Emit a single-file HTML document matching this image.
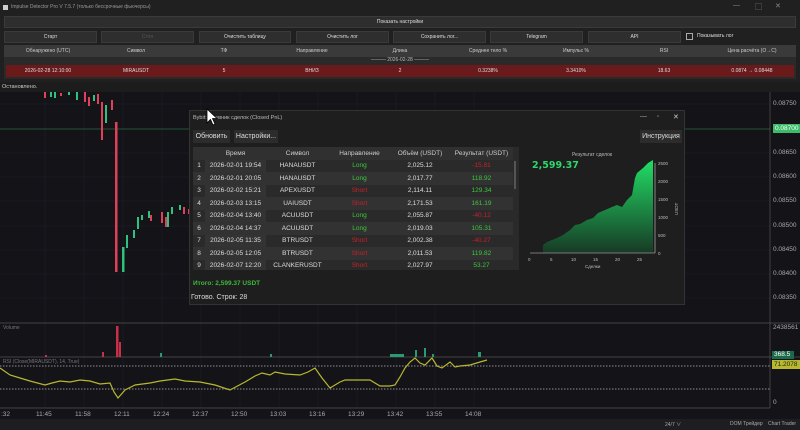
<!DOCTYPE html>
<html><head><meta charset="utf-8"><style>
*{margin:0;padding:0;box-sizing:border-box}
body{width:800px;height:430px;overflow:hidden;background:#131318;font-family:"Liberation Sans","Noto Sans CJK SC",sans-serif;color:#ddd;position:relative}
.abs{position:absolute}
.btn{position:absolute;background:#2e2e2e;border:1px solid #3a3a3a;color:#ddd;font-size:5px;text-align:center;line-height:10px;height:12px}
.th{position:absolute;font-size:5px;color:#ccc;text-align:center;top:46px;line-height:10px}
.rr{position:absolute;font-size:5px;color:#ddd;text-align:center;top:66px;line-height:10px}
.pl{position:absolute;left:773px;font-size:6.5px;color:#aaa}
table{border-collapse:collapse}
.dt td{font-size:6.5px;height:12.5px;text-align:center;color:#ddd}
.dt td.g{color:#3cc83c}.dt td.r{color:#c8202a}
.tl{position:absolute;top:411px;font-size:6.5px;color:#aaa}
</style></head><body>
<div class="abs" style="left:0;top:0;width:800px;height:82px;background:#202020"></div>
<div class="abs" style="left:3px;top:5px;width:5px;height:5px;background:#ccc"></div>
<div class="abs" style="left:11px;top:4px;font-size:5px;color:#999">Impulse Detector Pro V 7.5.7 (только бессрочные фьючерсы)</div>
<div class="abs" style="left:733px;top:2px;font-size:7px;color:#888">—</div>
<div class="abs" style="left:755px;top:2px;font-size:7px;color:#888">▢</div>
<div class="abs" style="left:775px;top:2px;font-size:7px;color:#888">✕</div>
<div class="btn" style="left:4px;top:16px;width:792px">Показать настройки</div>
<div class="btn" style="left:4px;top:31px;width:93px">Старт</div>
<div class="btn" style="left:101px;top:31px;width:93px;color:#555">Стоп</div>
<div class="btn" style="left:199px;top:31px;width:92px">Очистить таблицу</div>
<div class="btn" style="left:296px;top:31px;width:93px">Очистить лог</div>
<div class="btn" style="left:393px;top:31px;width:93px">Сохранить лог...</div>
<div class="btn" style="left:490px;top:31px;width:93px">Telegram</div>
<div class="btn" style="left:588px;top:31px;width:93px">API</div>
<div class="abs" style="left:686px;top:33px;width:7px;height:7px;border:1px solid #aaa"></div>
<div class="abs" style="left:697px;top:33px;font-size:5px">Показывать лог</div>
<div class="abs" style="left:4px;top:45px;width:792px;height:34px;background:#2a2a2a"></div>
<div class="abs" style="left:4px;top:45px;width:792px;height:12px;background:#3a3a3a"></div>
<div class="th" style="left:4px;width:88px">Обнаружено (UTC)</div>
<div class="th" style="left:92px;width:88px">Символ</div>
<div class="th" style="left:180px;width:88px">ТФ</div>
<div class="th" style="left:268px;width:88px">Направление</div>
<div class="th" style="left:356px;width:88px">Длина</div>
<div class="th" style="left:444px;width:88px">Среднее тело %</div>
<div class="th" style="left:532px;width:88px">Импульс %</div>
<div class="th" style="left:620px;width:88px">RSI</div>
<div class="th" style="left:708px;width:88px">Цена расчёта (O→C)</div>
<div class="abs" style="left:4px;top:57px;width:792px;text-align:center;font-size:5px;color:#bbb">——— 2026-02-28 ———</div>
<div class="abs" style="left:6px;top:65px;width:788px;height:12px;background:#6b1a1c"></div>
<div class="rr" style="left:4px;width:88px">2026-02-28 12:10:00</div>
<div class="rr" style="left:92px;width:88px">MIRAUSDT</div>
<div class="rr" style="left:180px;width:88px">5</div>
<div class="rr" style="left:268px;width:88px">ВНИЗ</div>
<div class="rr" style="left:356px;width:88px">2</div>
<div class="rr" style="left:444px;width:88px">0.3238%</div>
<div class="rr" style="left:532px;width:88px">3.3410%</div>
<div class="rr" style="left:620px;width:88px">18.63</div>
<div class="rr" style="left:708px;width:88px">0.0874 → 0.08448</div>
<div class="abs" style="left:0;top:82px;width:800px;height:10px;background:#1c1c1c"></div>
<div class="abs" style="left:2px;top:84px;font-size:5.5px;color:#ccc">Остановлено.</div>
<svg class="abs" style="left:0;top:92px" width="800" height="338">
<g stroke="#1e1e26" stroke-width="0.7">
<line x1="0" y1="12" x2="770" y2="12"/><line x1="0" y1="37" x2="770" y2="37"/><line x1="0" y1="61" x2="770" y2="61"/><line x1="0" y1="85" x2="770" y2="85"/><line x1="0" y1="109" x2="770" y2="109"/><line x1="0" y1="134" x2="770" y2="134"/><line x1="0" y1="158" x2="770" y2="158"/><line x1="0" y1="182" x2="770" y2="182"/><line x1="0" y1="206" x2="770" y2="206"/>
<line x1="45" y1="0" x2="45" y2="316"/><line x1="84" y1="0" x2="84" y2="316"/><line x1="123" y1="0" x2="123" y2="316"/><line x1="162" y1="0" x2="162" y2="316"/><line x1="201" y1="0" x2="201" y2="316"/><line x1="240" y1="0" x2="240" y2="316"/><line x1="279" y1="0" x2="279" y2="316"/><line x1="318" y1="0" x2="318" y2="316"/><line x1="357" y1="0" x2="357" y2="316"/><line x1="396" y1="0" x2="396" y2="316"/><line x1="435" y1="0" x2="435" y2="316"/><line x1="474" y1="0" x2="474" y2="316"/>
</g>
<line x1="0" y1="37" x2="770" y2="37" stroke="#2a6a40" stroke-width="0.8"/>
<g fill="#e0405a">
<rect x="44" y="0" width="2" height="6"/><rect x="60" y="1" width="2" height="3"/><rect x="84" y="0" width="2" height="10"/><rect x="88" y="5" width="2" height="9"/><rect x="97" y="2" width="2" height="10"/><rect x="101" y="10" width="2" height="38"/><rect x="111" y="8" width="2" height="10"/><rect x="115" y="30" width="2.5" height="150"/><rect x="150" y="123" width="2" height="6"/><rect x="161" y="120" width="2" height="11"/><rect x="165" y="125" width="2" height="10"/><rect x="183" y="115" width="2" height="7"/><rect x="188" y="117" width="2" height="5"/>
</g>
<g fill="#2ec27e">
<rect x="50" y="0" width="2" height="5"/><rect x="54" y="0" width="2" height="6"/><rect x="68" y="0" width="2" height="3"/><rect x="76" y="0" width="2" height="8"/><rect x="93" y="3" width="2" height="6"/><rect x="105" y="13" width="2" height="18"/><rect x="122" y="155" width="2.5" height="25"/><rect x="126" y="143" width="2" height="13"/><rect x="133" y="138" width="2" height="8"/><rect x="137" y="125" width="2" height="12"/><rect x="141" y="123" width="2" height="5"/><rect x="148" y="119" width="2" height="7"/><rect x="167" y="120" width="2" height="15"/><rect x="171" y="115" width="2" height="7"/><rect x="179" y="113" width="2" height="5"/>
</g>
<rect x="770" y="0" width="30" height="316" fill="#131318"/>
<line x1="770" y1="0" x2="770" y2="316" stroke="#555" stroke-width="0.7"/>
<line x1="0" y1="231" x2="800" y2="231" stroke="#555" stroke-width="0.8"/>
<line x1="0" y1="265" x2="800" y2="265" stroke="#555" stroke-width="0.8"/>
<line x1="0" y1="316" x2="770" y2="316" stroke="#555" stroke-width="0.7"/>
<g fill="#c8304a"><rect x="116" y="234" width="2.5" height="31"/><rect x="119" y="250" width="2" height="15"/><rect x="102" y="260" width="2" height="5"/><rect x="45" y="263" width="2" height="2"/></g>
<g fill="#2a9a70"><rect x="160" y="261" width="2" height="4"/><rect x="270" y="262" width="2" height="3"/><rect x="390" y="262" width="14" height="3"/><rect x="415" y="258" width="2" height="7"/><rect x="424" y="256" width="2" height="9"/><rect x="432" y="262" width="2" height="3"/><rect x="478" y="260" width="3" height="5"/></g>
<g stroke="#bbb" stroke-width="0.7" stroke-dasharray="1.5,1.5"><line x1="0" y1="274" x2="770" y2="274"/><line x1="0" y1="297" x2="770" y2="297"/></g>
<polyline fill="none" stroke="#b8b830" stroke-width="1.2" points="0,276 10,283 20,286 30,289 45,293 52,291 60,289 70,290 80,288 90,289 100,292 110,291 114,300 118,306 125,298 135,293 150,291 160,289 175,287 185,289 200,290 215,293 230,298 245,290 255,284 262,281 270,283 275,280 285,282 300,283 308,280 315,276 322,286 330,296 340,290 345,288 360,288 370,288 380,294 390,294 395,293 400,285 405,276 410,270 415,266 420,271 425,273 432,266 437,274 442,276 450,270 455,275 460,274 470,273 480,270 487,268"/>
</svg>
<div class="pl" style="top:100px">0.08750</div>
<div class="abs" style="left:773px;top:124px;width:27px;height:9px;background:#3cbc6a;color:#fff;font-size:6.5px;line-height:9px;padding-left:2px">0.08700</div>
<div class="pl" style="top:149px">0.08650</div>
<div class="pl" style="top:173px">0.08600</div>
<div class="pl" style="top:197px">0.08550</div>
<div class="pl" style="top:222px">0.08500</div>
<div class="pl" style="top:246px">0.08450</div>
<div class="pl" style="top:270px">0.08400</div>
<div class="pl" style="top:294px">0.08350</div>
<div class="pl" style="top:324px">2438561</div>
<div class="abs" style="left:772px;top:351px;width:22px;height:8px;background:#1c6a4a;color:#fff;font-size:6.5px;line-height:8px;padding-left:2px">368.5</div>
<div class="abs" style="left:772px;top:360px;width:28px;height:9px;background:#b8b830;color:#222;font-size:6.5px;line-height:9px;padding-left:2px">71.2078</div>
<div class="pl" style="top:399px">0</div>
<div class="abs" style="left:3px;top:325px;font-size:5px;color:#777">Volume</div>
<div class="abs" style="left:3px;top:359px;font-size:5px;color:#777">RSI (Close(MIRAUSDT), 14, True)</div>
<div class="tl" style="left:1px">:32</div><div class="tl" style="left:36px">11:45</div><div class="tl" style="left:75px">11:58</div><div class="tl" style="left:114px">12:11</div><div class="tl" style="left:153px">12:24</div><div class="tl" style="left:192px">12:37</div><div class="tl" style="left:231px">12:50</div><div class="tl" style="left:270px">13:03</div><div class="tl" style="left:309px">13:16</div><div class="tl" style="left:348px">13:29</div><div class="tl" style="left:387px">13:42</div><div class="tl" style="left:426px">13:55</div><div class="tl" style="left:465px">14:08</div>
<div class="abs" style="left:0;top:419px;width:800px;height:11px;background:#1e1e22"></div>
<div class="abs" style="left:665px;top:421px;font-size:5px;color:#aaa">24/7 ∨</div>
<div class="abs" style="left:730px;top:421px;font-size:5px;color:#aaa">DOM Трейдер</div>
<div class="abs" style="left:768px;top:421px;font-size:5px;color:#aaa">Chart Trader</div>
<div class="abs" style="left:189px;top:110px;width:496px;height:195px;background:#1e1e1e;border:1px solid #333"></div>
<div class="abs" style="left:193px;top:115px;font-size:5.5px;color:#bbb">Bybit: Дневник сделок (Closed PnL)</div>
<div class="abs" style="left:640px;top:113px;font-size:7px;color:#aaa">—</div>
<div class="abs" style="left:657px;top:114px;font-size:6px;color:#aaa">▫</div>
<div class="abs" style="left:673px;top:113px;font-size:7px;color:#ccc">✕</div>
<div class="abs" style="left:193px;top:130px;width:37px;height:13px;background:#2c2c2c;font-size:7px;line-height:13px;text-align:center">Обновить</div>
<div class="abs" style="left:234px;top:130px;width:44px;height:13px;background:#2c2c2c;font-size:7px;line-height:13px;text-align:center">Настройки...</div>
<div class="abs" style="left:640px;top:130px;width:42px;height:13px;background:#2c2c2c;font-size:7px;line-height:13px;text-align:center">Инструкция</div>
<div class="abs" style="left:193px;top:147px;width:326px;height:123px;background:#2a2a2a;overflow:hidden">
<table class="dt" style="width:320px">
<tr style="background:#303030"><td style="width:12px"></td><td style="width:61px;color:#ccc">Время</td><td style="width:63px;color:#ccc">Символ</td><td style="width:61px;color:#ccc">Направление</td><td style="width:60px;color:#ccc">Объём (USDT)</td><td style="width:63px;color:#ccc">Результат (USDT)</td></tr>
<tr><td>1</td><td style="background:#333">2026-02-01 19:54</td><td>HANAUSDT</td><td class="g">Long</td><td>2,025.12</td><td class="r">-15.81</td></tr>
<tr style="background:#323232"><td>2</td><td>2026-02-01 20:05</td><td>HANAUSDT</td><td class="g">Long</td><td>2,017.77</td><td class="g">118.92</td></tr>
<tr><td>3</td><td style="background:#333">2026-02-02 15:21</td><td>APEXUSDT</td><td class="r">Short</td><td>2,114.11</td><td class="g">129.34</td></tr>
<tr style="background:#323232"><td>4</td><td>2026-02-03 13:15</td><td>UAIUSDT</td><td class="r">Short</td><td>2,171.53</td><td class="g">161.19</td></tr>
<tr><td>5</td><td style="background:#333">2026-02-04 13:40</td><td>ACUUSDT</td><td class="g">Long</td><td>2,055.87</td><td class="r">-40.12</td></tr>
<tr style="background:#323232"><td>6</td><td>2026-02-04 14:37</td><td>ACUUSDT</td><td class="g">Long</td><td>2,019.03</td><td class="g">105.31</td></tr>
<tr><td>7</td><td style="background:#333">2026-02-05 11:35</td><td>BTRUSDT</td><td class="r">Short</td><td>2,002.38</td><td class="r">-40.27</td></tr>
<tr style="background:#323232"><td>8</td><td>2026-02-05 12:05</td><td>BTRUSDT</td><td class="r">Short</td><td>2,011.53</td><td class="g">119.82</td></tr>
<tr><td>9</td><td style="background:#333">2026-02-07 12:20</td><td>CLANKERUSDT</td><td class="r">Short</td><td>2,027.97</td><td class="g">53.27</td></tr>
</table>
<div class="abs" style="left:321px;top:14px;width:2px;height:28px;background:#555"></div>
</div>
<div class="abs" style="left:193px;top:280px;font-size:6.5px;color:#3cb83c;font-weight:bold">Итого: 2,599.37 USDT</div>
<div class="abs" style="left:191px;top:294px;font-size:7px;color:#ddd">Готово. Строк: 28</div>
<svg class="abs" style="left:520px;top:145px" width="165" height="125">
<defs><linearGradient id="ga" x1="0" y1="0" x2="0" y2="1"><stop offset="0" stop-color="#22dd66"/><stop offset="1" stop-color="#173a25"/></linearGradient></defs>
<text x="72" y="11" font-size="5" fill="#bbb" text-anchor="middle" font-family="Liberation Sans">Результат сделок</text>
<text x="12" y="23" font-size="9.5" fill="#2ed86a" font-weight="bold" font-family="DejaVu Sans">2,599.37</text>
<polygon fill="url(#ga)" points="23,100 27,97 32,95 37,93 43,90 50,85 55,80 60,79 67,75 73,73 78,68 85,65 92,62 97,60 102,62 107,55 112,50 115,33 117,28 123,23 128,18 133,15 133,108 23,108"/>
<line x1="10" y1="108" x2="135" y2="108" stroke="#ccc" stroke-width="0.6"/>
<line x1="135" y1="18" x2="135" y2="108" stroke="#ccc" stroke-width="0.6"/>
<g font-size="4.5" fill="#bbb" font-family="Liberation Sans"><text x="8" y="116">0</text><text x="30" y="116">5</text><text x="51" y="116">10</text><text x="73" y="116">15</text><text x="95" y="116">20</text><text x="117" y="116">25</text>
<text x="138" y="110">0</text><text x="138" y="92">500</text><text x="138" y="74">1000</text><text x="138" y="56">1500</text><text x="138" y="38">2000</text><text x="138" y="20">2500</text>
<text x="65" y="123">Сделки</text></g>
<text x="158" y="70" font-size="4.5" fill="#bbb" transform="rotate(-90 158 70)" font-family="Liberation Sans">USDT</text>
</svg>
<svg class="abs" style="left:206px;top:108px" width="12" height="18"><path d="M1 1 L1 15 L4.5 11.5 L7 17 L9 16 L6.5 10.5 L11 10.5 Z" fill="#fff" stroke="#000" stroke-width="0.8"/></svg>
</body></html>
